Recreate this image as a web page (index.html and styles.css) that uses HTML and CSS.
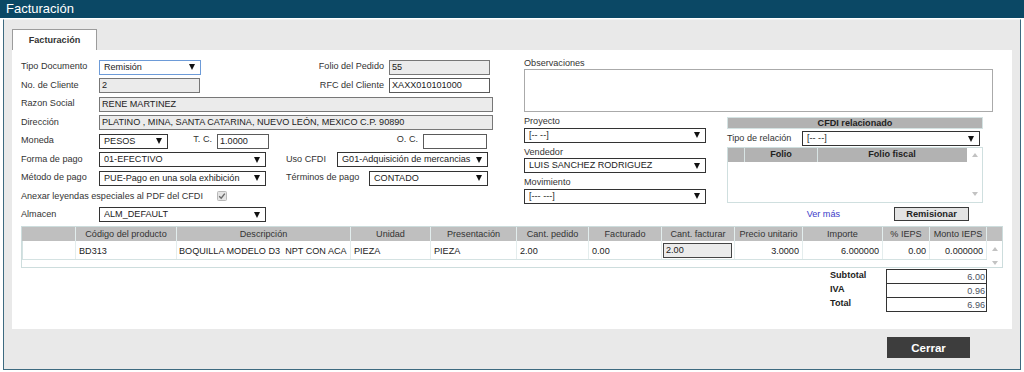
FILE: index.html
```html
<!DOCTYPE html>
<html lang="es">
<head>
    <meta charset="UTF-8">
    <title>Facturación</title>
    <link rel="stylesheet" href="styles.css">
</head>
<body>
    <div class="titlebar">Facturación</div>

    <div class="frame">
        <div class="tab">Facturación</div>

        <div class="panel">
            <div class="top">
                <div class="left">
                    <div class="row">
                        <span class="lbl">Tipo Documento</span>
                        <div class="ctl sel focus w102"><span>Remisión</span></div>
                        <span class="lbl2 w188">Folio del Pedido</span>
                        <div class="ctl ro w101">55</div>
                    </div>
                    <div class="row">
                        <span class="lbl">No. de Cliente</span>
                        <div class="ctl ro w101">2</div>
                        <span class="lbl2 w189">RFC del Cliente</span>
                        <div class="ctl w101">XAXX010101000</div>
                    </div>
                    <div class="row">
                        <span class="lbl">Razon Social</span>
                        <div class="ctl ro w394">RENE MARTINEZ</div>
                    </div>
                    <div class="row">
                        <span class="lbl">Dirección</span>
                        <div class="ctl ro w394">PLATINO , MINA, SANTA CATARINA, NUEVO LEÓN, MEXICO C.P. 90890</div>
                    </div>
                    <div class="row">
                        <span class="lbl">Moneda</span>
                        <div class="ctl sel w69"><span>PESOS</span></div>
                        <span class="lbl2 w49 up">T. C.</span>
                        <div class="ctl w52">1.0000</div>
                        <span class="lbl2 w154 up">O. C.</span>
                        <div class="ctl w64"></div>
                    </div>
                    <div class="row">
                        <span class="lbl">Forma de pago</span>
                        <div class="ctl sel w167"><span>01-EFECTIVO</span></div>
                        <span class="lbl3 w51">Uso CFDI</span>
                        <div class="ctl sel w151"><span>G01-Adquisición de mercancias</span></div>
                    </div>
                    <div class="row">
                        <span class="lbl">Método de pago</span>
                        <div class="ctl sel w167"><span>PUE-Pago en una sola exhibición</span></div>
                        <span class="lbl3 w83">Términos de pago</span>
                        <div class="ctl sel w119"><span>CONTADO</span></div>
                    </div>
                    <div class="row check-row">
                        <span>Anexar leyendas especiales al PDF del CFDI</span>
                        <svg class="checkbox" width="10" height="10" viewBox="0 0 10 10">
                            <rect x="0.5" y="0.5" width="9" height="9" rx="1" fill="#e4e4e4" stroke="#b8b8b8"/>
                            <polyline points="2.2,5.2 4.2,7.2 7.8,2.6" fill="none" stroke="#6a6a6a" stroke-width="1.4"/>
                        </svg>
                    </div>
                    <div class="row">
                        <span class="lbl">Almacen</span>
                        <div class="ctl sel w167"><span>ALM_DEFAULT</span></div>
                    </div>
                </div>

                <div class="right">
                    <div class="obs-label">Observaciones</div>
                    <div class="obs"></div>

                    <div class="rb">
                        <div class="rb-left">
                            <div class="fld-label">Proyecto</div>
                            <div class="ctl sel"><span>[-- --]</span></div>
                            <div class="fld-label">Vendedor</div>
                            <div class="ctl sel"><span>LUIS SANCHEZ RODRIGUEZ</span></div>
                            <div class="fld-label">Movimiento</div>
                            <div class="ctl sel"><span>[--- ---]</span></div>
                        </div>

                        <div class="cfdi">
                            <div class="cfdi-head">CFDI relacionado</div>
                            <div class="rel-row">
                                <span class="rel-lbl">Tipo de relación</span>
                                <div class="ctl sel w178"><span>[-- --]</span></div>
                            </div>
                            <div class="cfdi-grid">
                                <div class="cg-main">
                                    <div class="cg-head">
                                        <span></span>
                                        <span>Folio</span>
                                        <span>Folio fiscal</span>
                                    </div>
                                </div>
                                <div class="vscroll">
                                    <span class="arr-up"></span>
                                    <span class="arr-down"></span>
                                </div>
                            </div>
                            <div class="cfdi-actions">
                                <a class="ver-mas">Ver más</a>
                                <button class="btn-small">Remisionar</button>
                            </div>
                        </div>
                    </div>
                </div>
            </div>

            <div class="grid">
                <div class="gh"></div>
                <div class="gh">Código del producto</div>
                <div class="gh">Descripción</div>
                <div class="gh">Unidad</div>
                <div class="gh">Presentación</div>
                <div class="gh">Cant. pedido</div>
                <div class="gh">Facturado</div>
                <div class="gh">Cant. facturar</div>
                <div class="gh">Precio unitario</div>
                <div class="gh">Importe</div>
                <div class="gh">% IEPS</div>
                <div class="gh">Monto IEPS</div>
                <div class="gh last"></div>

                <div class="gd first"></div>
                <div class="gd">BD313</div>
                <div class="gd desc">BOQUILLA MODELO D3&nbsp; NPT CON ACA</div>
                <div class="gd">PIEZA</div>
                <div class="gd">PIEZA</div>
                <div class="gd">2.00</div>
                <div class="gd">0.00</div>
                <div class="gd cell-input"><div class="ctl ro qty">2.00</div></div>
                <div class="gd num">3.0000</div>
                <div class="gd num">6.000000</div>
                <div class="gd num">0.00</div>
                <div class="gd num">0.000000</div>
                <div class="gscroll">
                    <span class="arr-up"></span>
                    <span class="arr-down"></span>
                </div>
                <div class="gblank"></div>
            </div>

            <div class="totals">
                <div class="tot-row"><span class="tot-lbl">Subtotal</span><div class="tot-box">6.00</div></div>
                <div class="tot-row"><span class="tot-lbl">IVA</span><div class="tot-box">0.96</div></div>
                <div class="tot-row"><span class="tot-lbl">Total</span><div class="tot-box">6.96</div></div>
            </div>
        </div>

        <div class="actions">
            <button class="btn-close">Cerrar</button>
        </div>
    </div>
</body>
</html>
```

FILE: styles.css
```css
body {
    margin: 0;
    background-color: #ffffff;
    font-family: "Liberation Sans", Arial, sans-serif;
    font-size: 9.1px;
    color: #333333;
}
.titlebar {
    height: 18px;
    background-color: #0b4865;
    color: #ffffff;
    font-size: 13px;
    line-height: 18px;
    padding-left: 6px;
}
.frame {
    margin: 1px 3px 0 3px;
    height: 351px;
    box-sizing: border-box;
    background-color: #e9e9e9;
    border: 1px solid #3d6a80;
    border-top: 1px solid #f2f2f2;
    padding: 9px 8px 0 8px;
}
.tab {
    width: 85px;
    height: 21px;
    box-sizing: border-box;
    background-color: #ffffff;
    border: 1px solid #9c9c9c;
    border-bottom: none;
    font-weight: bold;
    text-align: center;
    line-height: 21px;
}
.panel {
    height: 279px;
    box-sizing: border-box;
    background-color: #ffffff;
    padding: 8px 9px 0 9px;
}
.top {
    display: flex;
    height: 168px;
}
.left {
    width: 472px;
    flex: none;
}
.row {
    display: flex;
    align-items: center;
    height: 18.5px;
}
.lbl {
    width: 78px;
    flex: none;
    margin-top: -2px;
}
.lbl2 {
    flex: none;
    text-align: right;
    padding-right: 5px;
    box-sizing: border-box;
    margin-top: -2px;
}
.lbl2.up {
    margin-top: -4px;
}
.lbl3 {
    flex: none;
    margin-left: 20px;
    margin-top: -2px;
}
.ctl {
    height: 15px;
    box-sizing: border-box;
    border: 1px solid #5a5a5a;
    background-color: #ffffff;
    padding: 0 2px;
    line-height: 13px;
    white-space: nowrap;
    overflow: hidden;
    color: #222222;
    flex: none;
}
.ro {
    background-color: #ebebeb;
    border-color: #777777;
}
.sel {
    display: flex;
    align-items: center;
    border-color: #333333;
    padding: 0 5px 0 4px;
}
.sel span {
    flex: 1;
    min-width: 0;
    overflow: hidden;
}
.sel::after {
    content: "";
    flex: none;
    margin-left: 3px;
    border-left: 3.5px solid transparent;
    border-right: 3.5px solid transparent;
    border-top: 6px solid #111111;
}
.focus {
    border-color: #6d9bd8;
}
.w49 { width: 49px; }
.w51 { width: 51px; }
.w52 { width: 52px; }
.w64 { width: 64px; }
.w69 { width: 69px; }
.w83 { width: 83px; }
.w101 { width: 101px; }
.w102 { width: 102px; }
.w119 { width: 119px; }
.w151 { width: 151px; }
.w154 { width: 154px; }
.w167 { width: 167px; }
.w178 { width: 178px; }
.w188 { width: 188px; }
.w189 { width: 189px; }
.w394 { width: 394px; }
.check-row {
    margin-top: -2px;
    height: 20px;
}
.checkbox {
    margin-left: 14px;
}
.right {
    margin-left: 31px;
    width: 479px;
}
.obs-label {
    height: 11px;
    line-height: 11px;
}
.obs {
    width: 469px;
    height: 43px;
    box-sizing: border-box;
    border: 1px solid #aaaaaa;
}
.rb {
    display: flex;
}
.rb-left {
    width: 182px;
    flex: none;
}
.fld-label {
    height: 15.5px;
    line-height: 18px;
}
.cfdi {
    margin-left: 21px;
    margin-top: 5px;
    width: 256px;
}
.cfdi-head {
    height: 12px;
    box-sizing: border-box;
    background-color: #b2b2b2;
    border: 1px solid #d4e3e3;
    font-weight: bold;
    text-align: center;
    line-height: 10px;
    color: #222222;
}
.rel-row {
    display: flex;
    align-items: center;
    margin-top: 2px;
    height: 15px;
}
.rel-lbl {
    width: 75px;
    flex: none;
    margin-top: -2px;
}
.cfdi-grid {
    display: flex;
    margin-top: 1px;
    height: 56px;
    box-sizing: border-box;
    border: 1px solid #cfdfdf;
}
.cg-main {
    flex: 1;
}
.cg-head {
    display: grid;
    grid-template-columns: 17px 73px 148px;
    height: 14px;
    background-color: #b2b2b2;
    font-weight: bold;
    text-align: center;
    line-height: 13px;
    color: #222222;
}
.cg-head span {
    border-right: 1px solid #d8e4e4;
}
.cg-head span:last-child {
    border-right: none;
}
.vscroll {
    width: 15px;
    display: flex;
    flex-direction: column;
    align-items: center;
    justify-content: space-between;
    padding: 5px 0 6px 0;
}
.arr-up {
    border-left: 3.5px solid transparent;
    border-right: 3.5px solid transparent;
    border-bottom: 4px solid #c2c2c2;
}
.arr-down {
    border-left: 3.5px solid transparent;
    border-right: 3.5px solid transparent;
    border-top: 4px solid #c2c2c2;
}
.cfdi-actions {
    display: flex;
    justify-content: flex-end;
    align-items: center;
    margin-top: 4px;
    height: 14px;
    padding-right: 14px;
}
.ver-mas {
    color: #3b3bc8;
    margin-right: 54px;
}
.btn-small {
    width: 75px;
    height: 14px;
    padding: 0;
    background-color: #e3e3e3;
    border: 1px solid #3a3a3a;
    font-family: inherit;
    font-size: 9.3px;
    font-weight: bold;
    color: #222222;
}
.grid {
    display: grid;
    grid-template-columns: 54px 101px 174px 80px 86px 72px 73px 73px 68px 80px 47px 57px 15px;
    grid-template-rows: 14px 18px 8px;
    border: 1px solid #cddddd;
}
.gh {
    background-color: #bfbfbf;
    border-right: 1px solid #e2eded;
    text-align: center;
    line-height: 14px;
    white-space: nowrap;
    overflow: hidden;
}
.gh.last {
    border-right: none;
}
.gd {
    border-right: 1px solid #e4eded;
    padding: 2px 3px 0 3px;
    line-height: 16px;
    white-space: nowrap;
    overflow: hidden;
    color: #222222;
}
.gd.first {
    border-left: 1px solid #d4e2e2;
}
.gd.desc {
    padding-left: 2px;
    padding-right: 0;
}
.gd.num {
    text-align: right;
}
.gd.cell-input {
    padding: 2px 0 0 1px;
}
.qty {
    width: 69px;
    height: 15px;
    border-color: #444444;
}
.gscroll {
    grid-row: 2 / 4;
    grid-column: 13;
    display: flex;
    flex-direction: column;
    align-items: center;
    justify-content: space-between;
    padding: 6px 0 2px 0;
}
.gblank {
    grid-column: 1 / 13;
    border-top: 1px solid #d4e2e2;
}
.totals {
    width: 157px;
    margin: 1px 16px 0 auto;
}
.tot-row {
    display: flex;
    height: 14px;
}
.tot-lbl {
    width: 56px;
    font-weight: bold;
    line-height: 13px;
    color: #222222;
}
.tot-box {
    width: 101px;
    height: 15px;
    box-sizing: border-box;
    border: 1px solid #333333;
    text-align: right;
    padding-right: 1px;
    line-height: 15px;
    color: #4a5060;
}
.actions {
    display: flex;
    justify-content: flex-end;
    padding-right: 42px;
    margin-top: 8px;
}
.btn-close {
    width: 83px;
    height: 21px;
    padding: 0;
    background-color: #3d3d3d;
    color: #ffffff;
    border: none;
    font-family: inherit;
    font-size: 11.5px;
    font-weight: bold;
}
```
